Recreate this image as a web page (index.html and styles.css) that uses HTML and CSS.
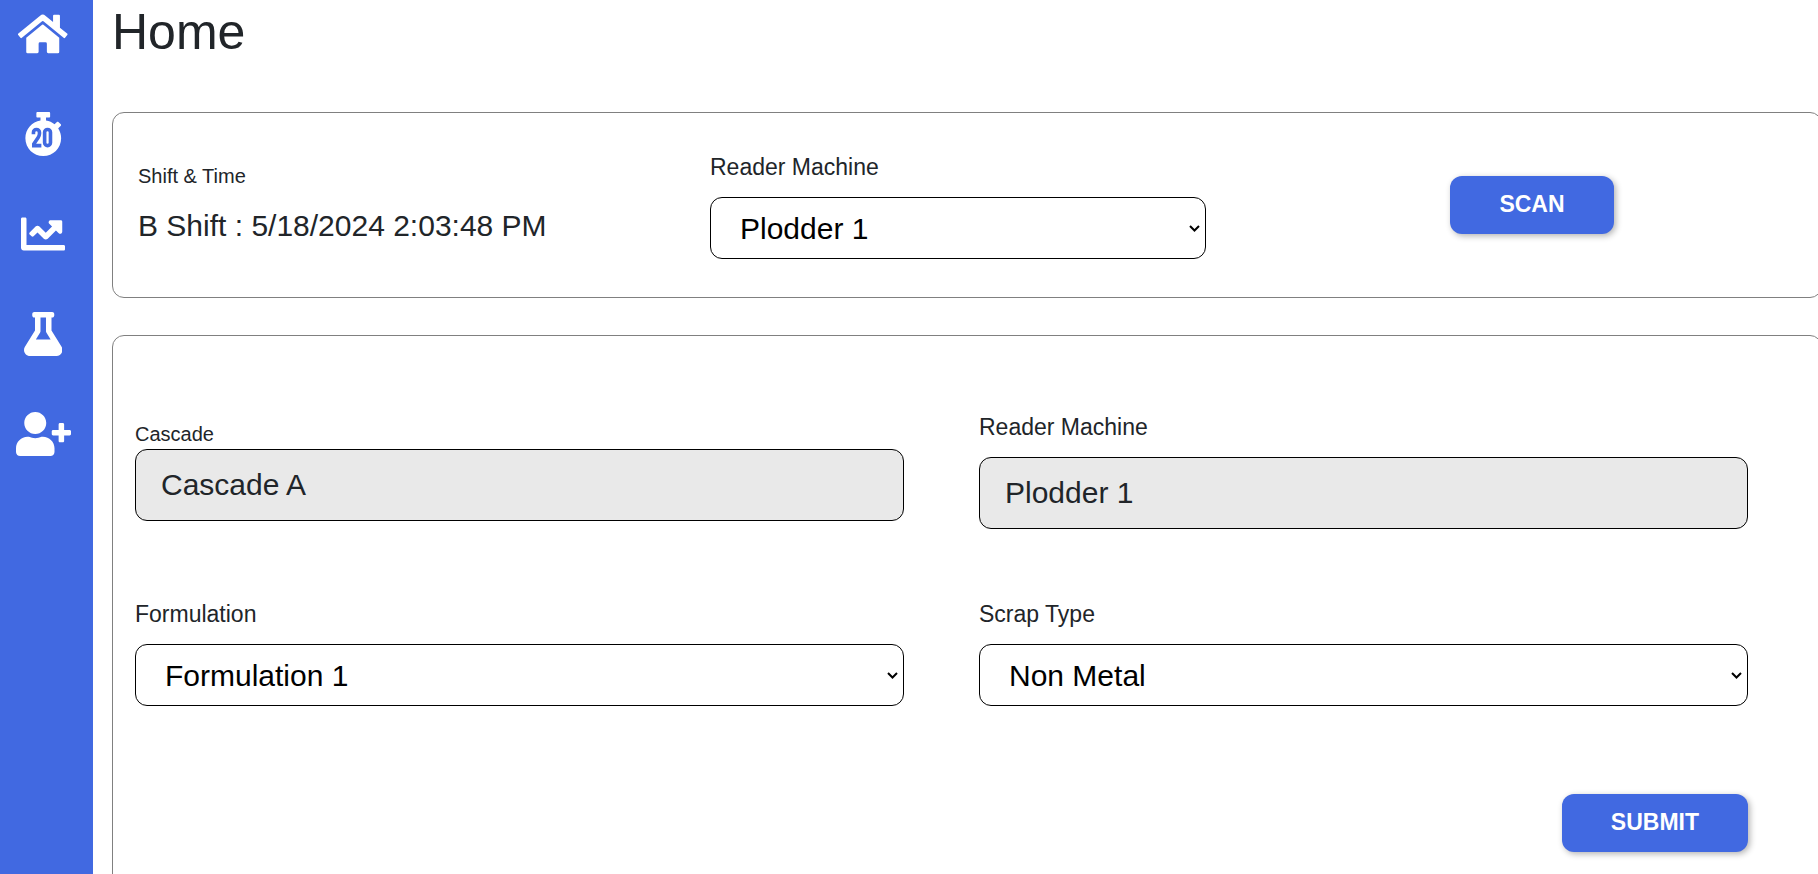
FILE: index.html
```html
<!DOCTYPE html>
<html lang="en">
<head>
<meta charset="utf-8">
<meta name="viewport" content="width=device-width, initial-scale=1">
<title>Home</title>
<link rel="stylesheet" href="styles.css">
</head>
<body>
<div class="app">
  <nav class="sidebar" aria-label="Main">
    <a class="nav-link" href="#home" aria-label="Home">
      <svg class="icon" viewBox="0 0 576 512"><path d="M280.37 148.26L96 300.11V464a16 16 0 0 0 16 16l112.06-.29a16 16 0 0 0 15.92-16V368a16 16 0 0 1 16-16h64a16 16 0 0 1 16 16v95.64a16 16 0 0 0 16 16.05L464 480a16 16 0 0 0 16-16V300L295.67 148.26a12.19 12.19 0 0 0-15.3 0zM571.6 251.47L488 182.56V44.05a12 12 0 0 0-12-12h-56a12 12 0 0 0-12 12v72.61L318.47 43a48 48 0 0 0-61 0L4.34 251.47a12 12 0 0 0-1.6 16.9l25.5 31A12 12 0 0 0 45.15 301l235.22-193.74a12.19 12.19 0 0 1 15.3 0L530.9 301a12 12 0 0 0 16.9-1.6l25.5-31a12 12 0 0 0-1.7-16.93z"/></svg>
    </a>
    <a class="nav-link" href="#timer" aria-label="Timer">
      <svg class="icon" viewBox="0 0 448 512">
        <path d="M432 304c0 114.9-93.1 208-208 208S16 418.9 16 304c0-104 76.3-190.2 176-205.5V64h-36c-6.6 0-12-5.4-12-12V12c0-6.6 5.4-12 12-12h136c6.6 0 12 5.4 12 12v40c0 6.6-5.4 12-12 12h-36v34.5c37.5 5.8 71.7 21.6 99.7 44.6l27.5-27.5c4.7-4.7 12.3-4.7 17 0l28.3 28.3c4.7 4.7 4.7 12.3 0 17l-29.4 29.4-.6.6C419.7 223.3 432 262.2 432 304z"/>
        <g class="icon-cut"><path d="M110 258v-20a35 35 0 0 1 70 0v14q0 20-17 48l-49 72v19h88"/><rect x="240" y="203" width="68" height="188" rx="34"/></g>
      </svg>
    </a>
    <a class="nav-link" href="#trends" aria-label="Trends">
      <svg class="icon" viewBox="0 0 512 512"><path d="M496 384H64V80c0-8.84-7.16-16-16-16H16C7.16 64 0 71.16 0 80v336c0 17.67 14.33 32 32 32h464c8.84 0 16-7.16 16-16v-32c0-8.84-7.16-16-16-16zM464 96H345.94c-21.38 0-32.09 25.85-16.97 40.97l32.4 32.4L288 242.75l-73.37-73.37c-12.5-12.5-32.76-12.5-45.25 0l-68.69 68.69c-6.25 6.25-6.25 16.38 0 22.63l22.62 22.62c6.25 6.25 16.38 6.25 22.63 0L192 237.25l73.37 73.37c12.5 12.5 32.76 12.5 45.25 0l96-96 32.4 32.4c15.12 15.12 40.97 4.41 40.97-16.97V112c.01-8.84-7.15-16-15.99-16z"/></svg>
    </a>
    <a class="nav-link" href="#formulations" aria-label="Formulations">
      <svg class="icon" viewBox="0 0 448 512"><path d="M437.2 403.5L320 215V64h8c13.3 0 24-10.7 24-24V24c0-13.3-10.7-24-24-24H120c-13.3 0-24 10.7-24 24v16c0 13.3 10.7 24 24 24h8v151L10.8 403.5C-18.5 450.6 15.3 512 70.9 512h306.2c55.7 0 89.4-61.5 60.1-108.5zM137.9 320l48.2-77.6c3.7-5.2 5.8-11.6 5.8-18.4V64h64v160c0 6.9 2.2 13.2 5.8 18.4l48.2 77.6h-172z"/></svg>
    </a>
    <a class="nav-link" href="#users" aria-label="Add user">
      <svg class="icon" viewBox="0 0 640 512"><path d="M624 208h-64v-64c0-8.8-7.2-16-16-16h-32c-8.8 0-16 7.2-16 16v64h-64c-8.8 0-16 7.2-16 16v32c0 8.8 7.2 16 16 16h64v64c0 8.8 7.2 16 16 16h32c8.8 0 16-7.2 16-16v-64h64c8.8 0 16-7.2 16-16v-32c0-8.8-7.2-16-16-16zm-400 48c70.7 0 128-57.3 128-128S294.7 0 224 0 96 57.3 96 128s57.3 128 128 128zm89.6 32h-16.7c-22.2 10.2-46.9 16-72.9 16s-50.6-5.8-72.9-16h-16.7C60.2 288 0 348.2 0 422.4V464c0 26.5 21.5 48 48 48h352c26.5 0 48-21.5 48-48v-41.6c0-74.2-60.2-134.4-134.4-134.4z"/></svg>
    </a>
  </nav>
  <main class="main">
    <h1 class="title">Home</h1>
    <section class="card scan-card">
      <div class="shift">
        <div class="label-small">Shift &amp; Time</div>
        <div class="shift-value">B Shift : 5/18/2024 2:03:48 PM</div>
      </div>
      <div class="field">
        <label class="label" for="reader">Reader Machine</label>
        <select class="control" id="reader"><option>Plodder 1</option></select>
      </div>
      <div class="scan-action"><button class="button" type="button">SCAN</button></div>
    </section>
    <form class="card form-card">
      <div class="field field-tight">
        <label class="label-small" for="cascade">Cascade</label>
        <input class="control readonly" id="cascade" type="text" value="Cascade A" readonly>
      </div>
      <div class="field">
        <label class="label" for="machine">Reader Machine</label>
        <input class="control readonly" id="machine" type="text" value="Plodder 1" readonly>
      </div>
      <div class="field">
        <label class="label" for="formulation">Formulation</label>
        <select class="control" id="formulation"><option>Formulation 1</option></select>
      </div>
      <div class="field">
        <label class="label" for="scrap">Scrap Type</label>
        <select class="control" id="scrap"><option>Non Metal</option></select>
      </div>
      <div class="form-actions"><button class="button" type="button">SUBMIT</button></div>
    </form>
  </main>
</div>
</body>
</html>
```
FILE: styles.css
```css
*, *::before, *::after { box-sizing: border-box; }

body {
  margin: 0;
  background: #fff;
  color: #212529;
  font-family: Arial, "Liberation Sans", sans-serif;
  overflow: hidden;
}

.app {
  display: flex;
  min-height: 100vh;
}

.sidebar {
  flex: 0 0 93px;
  display: flex;
  flex-direction: column;
  gap: 56px;
  padding: 12px 7px 0 0;
  background: #4169e1;
}

.nav-link {
  display: flex;
  justify-content: center;
  color: #fff;
}

.icon {
  display: block;
  height: 44px;
  fill: currentColor;
}

.icon-cut {
  fill: none;
  stroke: #4169e1;
  stroke-width: 42;
}

/* Cards run slightly past the right edge of the window. */
.main {
  flex: 1;
  min-width: 0;
  margin-right: -4px;
  padding-left: 19px;
}

.title {
  margin: 0 0 48px;
  font-size: 50px;
  font-weight: 400;
  line-height: 64px;
}

.card {
  display: grid;
  align-items: center;
  border: 1px solid #808080;
  border-radius: 12px;
}

.scan-card {
  grid-template-columns: repeat(3, 1fr);
  column-gap: 78px;
  margin-bottom: 37px;
  padding: 37px 41px 38px 23px;
}

.form-card {
  grid-template-columns: repeat(2, 1fr);
  gap: 68px 75px;
  padding: 74px 73px 74px 22px;
}

.shift {
  display: flex;
  flex-direction: column;
  gap: 13px;
  padding: 0 2px;
}

.shift-value {
  font-size: 30px;
  line-height: 44px;
}

.field {
  display: flex;
  flex-direction: column;
  gap: 13px;
}

.field-tight { gap: 0; }

.label {
  font-size: 23px;
  line-height: 34px;
}

.label-small {
  font-size: 20px;
  line-height: 30px;
}

.control {
  width: 100%;
  height: 62px;
  padding: 0 25px;
  border: 1px solid #000;
  border-radius: 12px;
  background-color: #fff;
  color: #000;
  font-family: inherit;
  font-size: 30px;
}

select.control {
  appearance: none;
  padding: 0 25px 0 29px;
  background-image: url("data:image/svg+xml,%3Csvg xmlns='http://www.w3.org/2000/svg' width='11' height='7'%3E%3Cpath d='M1 1l4.500 4.500L10 1' fill='none' stroke='%23000' stroke-width='2'/%3E%3C/svg%3E");
  background-repeat: no-repeat;
  background-position: right 5px center;
}

.readonly {
  height: 72px;
  background-color: #e9e9e9;
  color: #212529;
}

.button {
  padding: 11px 49px 13px;
  border: 0;
  border-radius: 12px;
  background: #4169e1;
  box-shadow: 2px 2px 6px rgba(0, 0, 0, 0.3);
  color: #fff;
  font-family: inherit;
  font-size: 23px;
  font-weight: 700;
  line-height: 34px;
}

.scan-action { text-align: center; }

.form-actions {
  grid-column: 1 / -1;
  padding-top: 20px;
  text-align: right;
}
```
